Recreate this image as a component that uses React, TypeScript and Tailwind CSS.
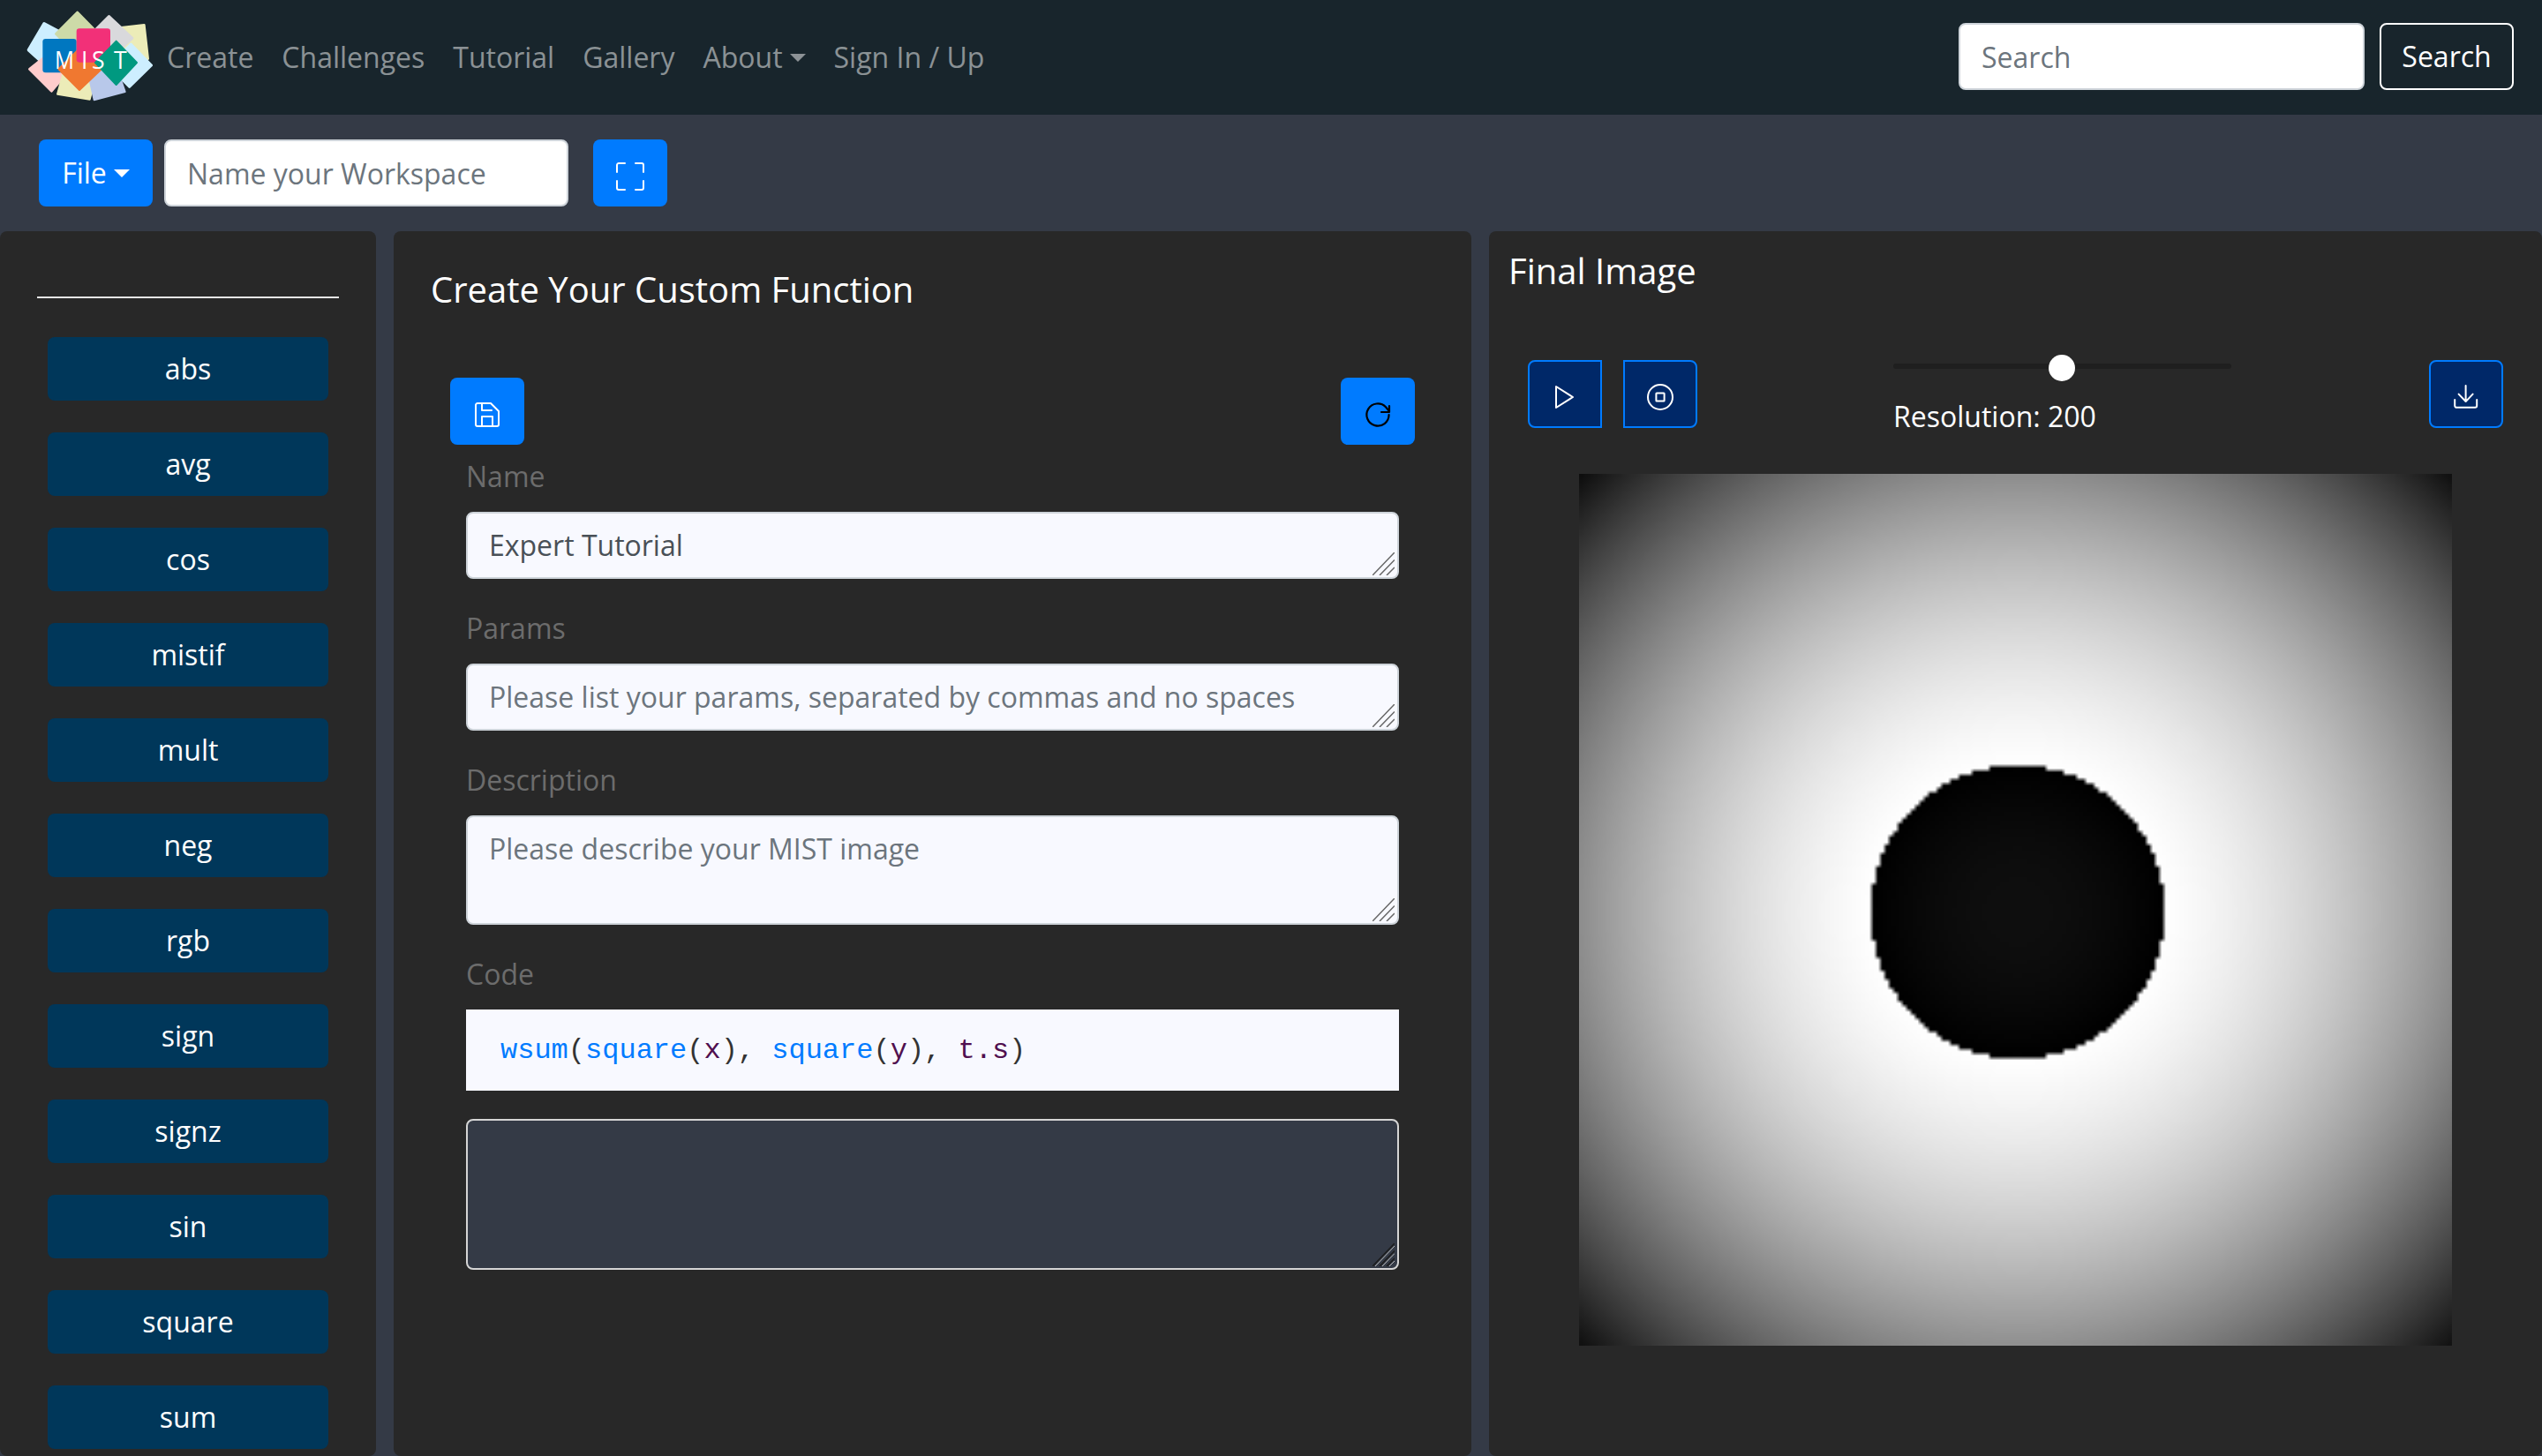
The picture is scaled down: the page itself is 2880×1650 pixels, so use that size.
import { useEffect, useRef, type ReactNode } from "react";

const functions = ["abs", "avg", "cos", "mistif", "mult", "neg", "rgb", "sign", "signz", "sin", "square", "sum"];

const Logo = () => (
  <svg viewBox="0 0 519 390" className="w-[173px] h-[130px] shrink-0">
    <path d="M150 80 L215 115 L185 250 L97 170 Z" fill="#cdeeff" stroke="#cdeeff" strokeWidth="10" strokeLinejoin="round" />
    <path d="M150 195 L235 240 L175 310 L100 235 Z" fill="#ffcccc" stroke="#ffcccc" strokeWidth="8" strokeLinejoin="round" />
    <path d="M263 42 L335 115 L263 190 L190 115 Z" fill="#cddaa8" stroke="#cddaa8" strokeWidth="8" strokeLinejoin="round" />
    <path d="M490 85 L503 200 L420 210 L405 95 Z" fill="#ececb8" stroke="#ececb8" strokeWidth="8" strokeLinejoin="round" />
    <path d="M370 55 L450 130 L370 205 L295 130 Z" fill="#d9d9dc" stroke="#d9d9dc" strokeWidth="8" strokeLinejoin="round" />
    <path d="M515 222 L440 296 L370 225 L445 150 Z" fill="#cdeeff" stroke="#cdeeff" strokeWidth="8" strokeLinejoin="round" />
    <path d="M220 230 L330 245 L305 338 L195 320 Z" fill="#ececb8" stroke="#ececb8" strokeWidth="6" strokeLinejoin="round" />
    <path d="M300 250 L395 225 L425 312 L320 340 Z" fill="#b8c8ea" stroke="#b8c8ea" strokeWidth="6" strokeLinejoin="round" />
    <rect x="145" y="132" width="115" height="115" rx="10" fill="#0077c0" />
    <path d="M270 165 L345 235 L270 306 L199 235 Z" fill="#f07830" stroke="#f07830" strokeWidth="6" strokeLinejoin="round" />
    <rect x="260" y="97" width="115" height="115" rx="10" fill="#f23078" />
    <path d="M395 140 L465 213 L395 288 L324 213 Z" fill="#009980" stroke="#009980" strokeWidth="6" strokeLinejoin="round" />
    <text x="186" y="235" fill="#fff" fontSize="80" fontFamily="Open Sans" textLength="66" lengthAdjust="spacingAndGlyphs">M</text>
    <text x="276" y="235" fill="#fff" fontSize="80" fontFamily="Open Sans">I</text>
    <text x="312" y="235" fill="#fff" fontSize="80" fontFamily="Open Sans">S</text>
    <text x="387" y="235" fill="#fff" fontSize="80" fontFamily="Open Sans">T</text>
  </svg>
);

const Caret = () => (
  <span className="ml-[8px] inline-block align-[7px] border-x-[9px] border-t-[9px] border-x-transparent border-t-current" />
);

const Icon = ({ children, stroke = "#fff" }: { children: ReactNode; stroke?: string }) => (
  <svg
    viewBox="0 0 16 16"
    fill="none"
    stroke={stroke}
    strokeWidth="1"
    strokeLinecap="round"
    strokeLinejoin="round"
    className="w-[32px] h-[32px] mt-[7px]"
  >
    {children}
  </svg>
);

const BlueButton = ({ children }: { children: ReactNode }) => (
  <button className="w-[84px] h-[76px] rounded-lg bg-[#007bff] flex items-center justify-center">{children}</button>
);

const NavyButton = ({ children, className }: { children: ReactNode; className: string }) => (
  <button className={`w-[84px] h-[77px] bg-[#002868] border-2 border-[#007bff] flex items-center justify-center ${className}`}>
    {children}
  </button>
);

// the browser's textarea corner grip, 25px wide at this scale
const Grip = ({ dark }: { dark?: boolean }) => (
  <svg viewBox="0 0 25 26" className="absolute right-[5px] bottom-[4px] w-[25px] h-[26px] pointer-events-none">
    <g stroke={dark ? "#1c1c1c" : "#666"} strokeWidth="1.5">
      <path d="M0 26L25 0M8 26L25 8.5M16 26L25 17" />
    </g>
    {dark && (
      <g stroke="#bbb" strokeWidth="1">
        <path d="M3 26L25 3M11 26L25 11.5M19 26L25 20" />
      </g>
    )}
  </svg>
);

const Field = ({ label, children }: { label: string; children: ReactNode }) => (
  <div>
    <div className="h-[44px] leading-[44px] text-[#6c6c6c]">{label}</div>
    <div className="mt-[18px]">{children}</div>
  </div>
);

const TextBox = ({ value, placeholder, height }: { value?: string; placeholder: string; height: string }) => (
  <div className="relative">
    <textarea
      readOnly
      value={value}
      placeholder={placeholder}
      className={`block w-full ${height} resize-none rounded-lg border-2 border-[#ced4da] bg-[#f8f9ff] px-[24px] py-[12px] text-[32px] leading-[48px] text-[#495057] placeholder:text-[#6c757d] outline-none`}
    />
    <Grip />
  </div>
);

const FinalImage = () => {
  const ref = useRef<HTMLCanvasElement>(null);

  useEffect(() => {
    const ctx = ref.current?.getContext("2d");
    if (!ctx) return;
    const size = 200;
    const img = ctx.createImageData(size, size);
    const s = -0.887;
    for (let j = 0; j < size; j++) {
      for (let i = 0; i < size; i++) {
        const x = -1 + (2 * i) / size;
        const y = -1 + (2 * j) / size;
        let v = s - (x * x + y * y);
        while (v < -1) v += 2;
        const c = Math.round(((v + 1) / 2) * 255);
        const p = (j * size + i) * 4;
        img.data[p] = c;
        img.data[p + 1] = c;
        img.data[p + 2] = c;
        img.data[p + 3] = 255;
      }
    }
    ctx.putImageData(img, 0, 0);
  }, []);

  return <canvas ref={ref} width={200} height={200} className="block w-[989px] h-[988px]" />;
};

export default function App() {
  return (
    <div className="h-[1650px] overflow-hidden bg-[#343a46] text-[32px] leading-[48px] font-['Open_Sans',sans-serif]">
      <nav className="h-[130px] bg-[#18252c] flex items-center pr-[32px]">
        <Logo />
        <div className="flex text-white/50">
          <a className="px-4">Create</a>
          <a className="px-4">Challenges</a>
          <a className="px-4">Tutorial</a>
          <a className="px-4">Gallery</a>
          <a className="px-4">
            About
            <Caret />
          </a>
          <a className="px-4">Sign In / Up</a>
        </div>
        <div className="ml-auto mb-[2px] flex gap-[17px]">
          <input
            placeholder="Search"
            className="w-[460px] h-[76px] rounded-lg border-2 border-[#ced4da] bg-white px-[24px] text-[#495057] placeholder:text-[#6c757d] outline-none"
          />
          <button className="w-[152px] h-[76px] rounded-lg border-2 border-white text-white">Search</button>
        </div>
      </nav>

      <div className="h-[132px] flex items-center pl-[44px]">
        <button className="w-[129px] h-[76px] rounded-lg bg-[#007bff] text-white">
          File
          <Caret />
        </button>
        <input
          placeholder="Name your Workspace"
          className="ml-[13px] w-[458px] h-[76px] rounded-lg border-2 border-[#ced4da] bg-white px-[24px] text-[#495057] placeholder:text-[#6c757d] outline-none"
        />
        <div className="ml-[28px]">
          <BlueButton>
            <Icon>
              <path d="M.5 5.5v-4a1 1 0 0 1 1-1h3.5M11 .5h3.5a1 1 0 0 1 1 1v4M15.5 10.5v4a1 1 0 0 1-1 1H11M5 15.5H1.5a1 1 0 0 1-1-1v-4" />
            </Icon>
          </BlueButton>
        </div>
      </div>

      <div className="flex gap-5 items-start">
        <aside className="w-[426px] h-[1388px] rounded-lg bg-[#282828] px-[42px] pt-[74px]">
          <div className="h-[2px] bg-[#e5e5e5]" />
          <div className="mt-[44px] px-[12px] flex flex-col gap-[36px]">
            {functions.map((name) => (
              <button key={name} className="h-[72px] shrink-0 rounded-lg bg-[#00375a] text-white">
                {name}
              </button>
            ))}
          </div>
        </aside>

        <main className="w-[1221px] h-[1388px] rounded-lg bg-[#282828] px-[42px] pt-[36px]">
          <h2 className="text-[40px] leading-[60px] text-white">Create Your Custom Function</h2>
          <div className="mt-[70px] px-[22px] flex justify-between">
            <BlueButton>
              <Icon>
                <path d="M2.5 1.5h7.5l4.5 4.5v7.5a1 1 0 0 1-1 1h-11a1 1 0 0 1-1-1v-11a1 1 0 0 1 1-1z" />
                <path d="M5 1.5v4h5.5M5 14.5V9h6v5.5" />
              </Icon>
            </BlueButton>
            <BlueButton>
              <Icon stroke="#000">
                <path d="M14.3 8A6.3 6.3 0 1 1 12.5 3.6L14.5 6" strokeWidth="1.1" />
                <path d="M14.5 3v3.5H10" strokeWidth="1.1" />
              </Icon>
            </BlueButton>
          </div>
          <div className="ml-[40px] mr-[40px]">
            <div className="pt-[14px] flex flex-col gap-[34px]">
              <Field label="Name">
                <TextBox value="Expert Tutorial" placeholder="" height="h-[76px]" />
              </Field>
              <Field label="Params">
                <TextBox placeholder="Please list your params, separated by commas and no spaces" height="h-[76px]" />
              </Field>
              <Field label="Description">
                <TextBox placeholder="Please describe your MIST image" height="h-[124px]" />
              </Field>
              <Field label="Code">
                <div className="h-[92px] bg-[#f8f9ff] px-[39px] pt-[2px] flex items-center font-['Liberation_Mono',monospace] text-[32px] text-[#333]">
                  <span className="text-[#007bff]">wsum</span>(<span className="text-[#007bff]">square</span>(
                  <span className="text-[#50104f]">x</span>),&nbsp;<span className="text-[#007bff]">square</span>(
                  <span className="text-[#50104f]">y</span>),&nbsp;<span className="text-[#50104f]">t.s</span>)
                </div>
              </Field>
            </div>
            <div className="relative mt-[32px]">
              <textarea
                readOnly
                className="block w-full h-[171px] resize-none rounded-lg border-2 border-[#d5d5d5] bg-[#343a46] outline-none"
              />
              <Grip dark />
            </div>
          </div>
        </main>

        <section className="flex-1 h-[1388px] rounded-lg bg-[#282828] pt-[15px] text-white">
          <h2 className="pl-[22px] text-[40px] leading-[60px]">Final Image</h2>
          <div className="mt-[71px] px-[44px] flex items-start">
            <div className="flex gap-[24px]">
              <NavyButton className="rounded-l-lg">
                <Icon>
                  <path d="M3 2v12l9.5-6z" />
                </Icon>
              </NavyButton>
              <NavyButton className="rounded-r-lg">
                <Icon>
                  <circle cx="8" cy="8" r="7" />
                  <rect x="5.7" y="5.7" width="4.6" height="4.6" rx="0.3" />
                </Icon>
              </NavyButton>
            </div>
            <div className="ml-[222px] w-[383px]">
              <div className="relative h-[6px] mt-[4px] rounded bg-[#1f1f1f]">
                <div className="absolute left-[176px] top-[-10px] w-[30px] h-[30px] rounded-full bg-white" />
              </div>
              <div className="mt-[30px]">Resolution: 200</div>
            </div>
            <div className="ml-auto">
              <NavyButton className="rounded-lg">
                <Icon>
                  <path d="M7.8 1.5v9M3.8 6.3l4 4.2 4-4.2M1.6 9.5v3.4a1 1 0 0 0 1 1h10.5a1 1 0 0 0 1-1V9.5" />
                </Icon>
              </NavyButton>
            </div>
          </div>
          <div className="mt-[41px] ml-[102px]">
            <FinalImage />
          </div>
        </section>
      </div>
    </div>
  );
}
